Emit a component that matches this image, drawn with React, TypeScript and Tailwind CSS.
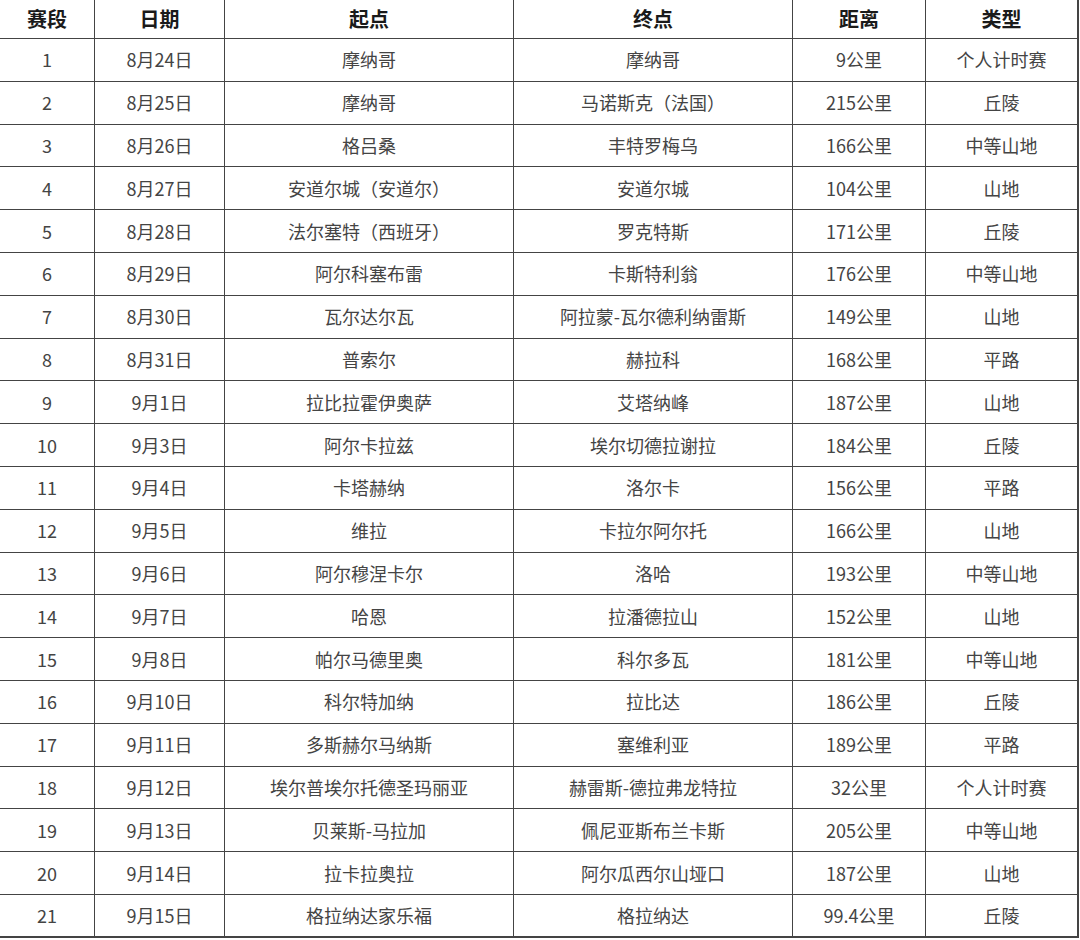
import React from "react";

const rows: string[][] = [
  ["1", "8月24日", "摩纳哥", "摩纳哥", "9公里", "个人计时赛"],
  ["2", "8月25日", "摩纳哥", "马诺斯克（法国）", "215公里", "丘陵"],
  ["3", "8月26日", "格吕桑", "丰特罗梅乌", "166公里", "中等山地"],
  ["4", "8月27日", "安道尔城（安道尔）", "安道尔城", "104公里", "山地"],
  ["5", "8月28日", "法尔塞特（西班牙）", "罗克特斯", "171公里", "丘陵"],
  ["6", "8月29日", "阿尔科塞布雷", "卡斯特利翁", "176公里", "中等山地"],
  ["7", "8月30日", "瓦尔达尔瓦", "阿拉蒙-瓦尔德利纳雷斯", "149公里", "山地"],
  ["8", "8月31日", "普索尔", "赫拉科", "168公里", "平路"],
  ["9", "9月1日", "拉比拉霍伊奥萨", "艾塔纳峰", "187公里", "山地"],
  ["10", "9月3日", "阿尔卡拉兹", "埃尔切德拉谢拉", "184公里", "丘陵"],
  ["11", "9月4日", "卡塔赫纳", "洛尔卡", "156公里", "平路"],
  ["12", "9月5日", "维拉", "卡拉尔阿尔托", "166公里", "山地"],
  ["13", "9月6日", "阿尔穆涅卡尔", "洛哈", "193公里", "中等山地"],
  ["14", "9月7日", "哈恩", "拉潘德拉山", "152公里", "山地"],
  ["15", "9月8日", "帕尔马德里奥", "科尔多瓦", "181公里", "中等山地"],
  ["16", "9月10日", "科尔特加纳", "拉比达", "186公里", "丘陵"],
  ["17", "9月11日", "多斯赫尔马纳斯", "塞维利亚", "189公里", "平路"],
  ["18", "9月12日", "埃尔普埃尔托德圣玛丽亚", "赫雷斯-德拉弗龙特拉", "32公里", "个人计时赛"],
  ["19", "9月13日", "贝莱斯-马拉加", "佩尼亚斯布兰卡斯", "205公里", "中等山地"],
  ["20", "9月14日", "拉卡拉奥拉", "阿尔瓜西尔山垭口", "187公里", "山地"],
  ["21", "9月15日", "格拉纳达家乐福", "格拉纳达", "99.4公里", "丘陵"],
];

const headers = ["赛段", "日期", "起点", "终点", "距离", "类型"];

export default function App() {
  return (
    <div
      className="w-[1080px] h-[940px] bg-white overflow-hidden"
      style={{ fontFamily: '"Noto Sans CJK SC", "Noto Sans", sans-serif' }}
    >
      <div className="grid w-[1079px] grid-cols-[95px_130px_289px_279px_133px_153px]">
        {headers.map((h, i) => (
          <div
            key={h}
            className={`h-[39px] flex items-center justify-center border-b-[1.5px] border-[#444] text-[20px] font-bold text-[#1a1a1a] ${
              i < 5 ? "border-r-[1.5px]" : "border-r-[2px]"
            }`}
          >
            {h}
          </div>
        ))}
        {rows.map((r, ri) =>
          r.map((c, ci) => (
            <div
              key={`${ri}-${ci}`}
              className={`h-[42.8px] flex items-center justify-center border-[#444] text-[18px] text-[#444] ${
                ci < 5 ? "border-r-[1.5px]" : "border-r-[2px]"
              } ${ri === rows.length - 1 ? "border-b-[2px]" : "border-b-[1.5px]"}`}
            >
              {c}
            </div>
          ))
        )}
      </div>
    </div>
  );
}
